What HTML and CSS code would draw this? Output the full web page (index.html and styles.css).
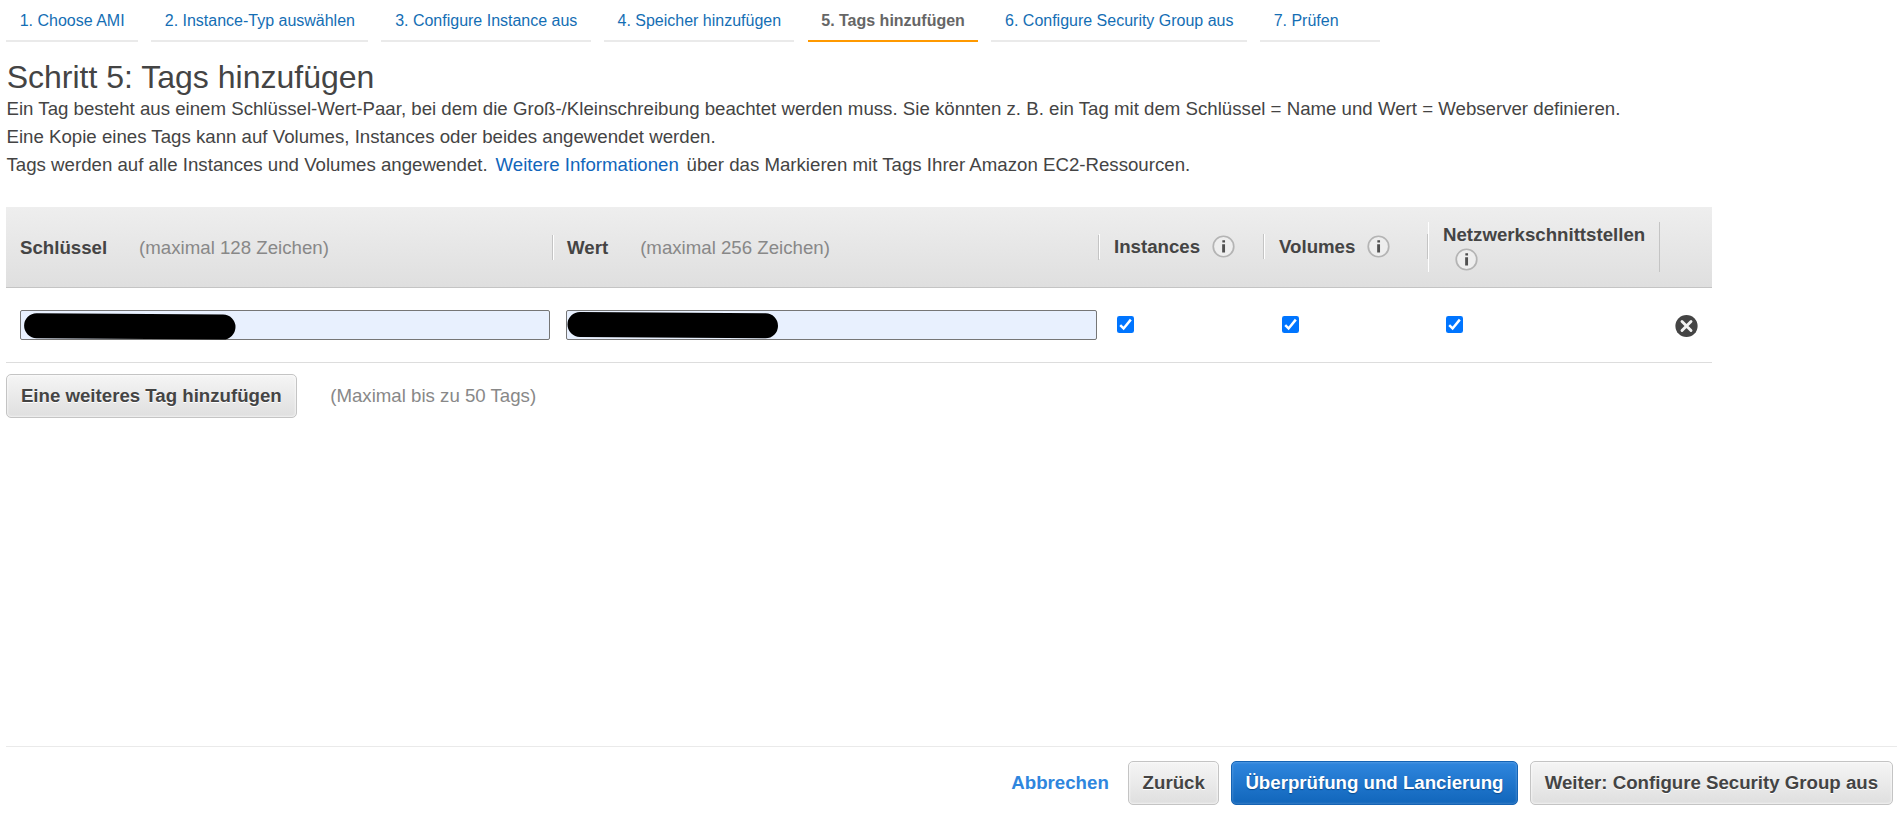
FILE: index.html
```html
<!DOCTYPE html>
<html lang="de">
<head>
<meta charset="utf-8">
<title>Schritt 5: Tags hinzufügen</title>
<link rel="stylesheet" href="styles.css">
</head>
<body>
<svg class="defs" width="0" height="0">
  <symbol id="info" viewBox="0 0 24 24">
    <circle cx="12" cy="12" r="10.7" fill="#eee" stroke="#b4b4b4" stroke-width="1.8"/>
    <path d="M10.8 5.5h2.8v2.4h-2.8zM10.6 9.6h3v8.7h-3z" fill="#505050"/>
  </symbol>
  <symbol id="check" viewBox="0 0 17 17">
    <rect width="17" height="17" rx="2.3" fill="#0075ff"/>
    <path d="M3.2 9.2l3.4 3.3L13.8 3.6" fill="none" stroke="#fff" stroke-width="2.5"/>
  </symbol>
</svg>
<div class="page">
  <nav class="steps">
    <a class="step">1. Choose AMI</a>
    <a class="step">2. Instance-Typ auswählen</a>
    <a class="step">3. Configure Instance aus</a>
    <a class="step">4. Speicher hinzufügen</a>
    <a class="step active">5. Tags hinzufügen</a>
    <a class="step">6. Configure Security Group aus</a>
    <a class="step last">7. Prüfen</a>
  </nav>

  <main class="content">
    <h1 class="title">Schritt 5: Tags hinzufügen</h1>
    <p class="intro">Ein Tag besteht aus einem Schlüssel-Wert-Paar, bei dem die Groß-/Kleinschreibung beachtet werden muss. Sie könnten z. B. ein Tag mit dem Schlüssel = Name und Wert = Webserver definieren.<br>Eine Kopie eines Tags kann auf Volumes, Instances oder beides angewendet werden.<br>Tags werden auf alle Instances und Volumes angewendet. <a class="more">Weitere Informationen</a> über das Markieren mit Tags Ihrer Amazon EC2-Ressourcen.</p>

    <section class="table">
      <div class="row head">
        <div class="th key"><b>Schlüssel</b><span class="limit">(maximal 128 Zeichen)</span></div>
        <div class="th value"><b>Wert</b><span class="limit">(maximal 256 Zeichen)</span></div>
        <div class="th scope"><b>Instances</b><svg class="info"><use href="#info"/></svg></div>
        <div class="th scope"><b>Volumes</b><svg class="info"><use href="#info"/></svg></div>
        <div class="th tall"><b>Netzwerkschnittstellen</b><svg class="info"><use href="#info"/></svg></div>
        <div></div>
      </div>
      <div class="row body">
        <div class="td field-cell first">
          <div class="field">
            <svg class="redaction" viewBox="0 0 530 30"><path d="M16.6 15.7L203 17" stroke="#000" stroke-width="25" stroke-linecap="round"/></svg>
          </div>
        </div>
        <div class="td field-cell">
          <div class="field">
            <svg class="redaction" viewBox="0 0 531 30"><path d="M14 14.5L199.5 15.8" stroke="#000" stroke-width="25" stroke-linecap="round"/></svg>
          </div>
        </div>
        <div class="td"><svg class="check"><use href="#check"/></svg></div>
        <div class="td"><svg class="check"><use href="#check"/></svg></div>
        <div class="td"><svg class="check"><use href="#check"/></svg></div>
        <div class="td remove-cell">
          <svg class="remove" viewBox="0 0 24 24"><circle cx="12" cy="12" r="11.6" fill="#444"/><path d="M7.3 7.3l9.4 9.4M16.7 7.3l-9.4 9.4" stroke="#f2f2f2" stroke-width="3" stroke-linecap="round"/></svg>
        </div>
      </div>
    </section>

    <div class="add">
      <button class="btn">Eine weiteres Tag hinzufügen</button>
      <span class="hint">(Maximal bis zu 50 Tags)</span>
    </div>
  </main>

  <footer class="footer">
    <a class="cancel">Abbrechen</a>
    <button class="btn compact">Zurück</button>
    <button class="btn primary compact">Überprüfung und Lancierung</button>
    <button class="btn">Weiter: Configure Security Group aus</button>
  </footer>
</div>
</body>
</html>
```
FILE: styles.css
```css
* { box-sizing: border-box; }

body {
  margin: 0;
  background: #fff;
  color: #444;
  font-family: "Liberation Sans", Arial, sans-serif;
  font-size: 18.667px;
  line-height: 25px;
}

.defs { position: absolute; }

.page {
  display: flex;
  flex-direction: column;
  height: 815px;
  padding-left: 6px;
  overflow: hidden;
}

.steps {
  display: flex;
  gap: 13.2px;
}

.step {
  height: 42px;
  padding: 12px 13.3px 0 13.7px;
  border-bottom: 2px solid #eaeaea;
  color: #146eb4;
  font-size: 16px;
  line-height: 18px;
  letter-spacing: -0.005px;
  white-space: nowrap;
}

.step.active {
  border-bottom-color: #f90;
  color: #666;
  font-weight: bold;
}

.step.last { width: 120px; }

.content { flex: 1; }

.title {
  margin: 17px 0 0 0.7px;
  font-size: 32px;
  font-weight: normal;
  line-height: 36px;
}

.intro {
  margin: 0 0 0 0.5px;
  line-height: 28px;
  white-space: nowrap;
}

.more {
  margin: 0 2.67px;
  color: #1166bb;
}

.table {
  width: 1706px;
  margin-top: 28px;
}

.row {
  display: grid;
  grid-template-columns: 547px 546px 165px 164px 232px 52px;
}

.head {
  height: 81px;
  align-items: center;
  border-bottom: 1px solid #c4c4c4;
  background: linear-gradient(#eee, #dfdfdf);
}

.th {
  display: flex;
  height: 25px;
  padding-left: 14px;
  border-left: 1px solid #fff;
  border-right: 1px solid #c4c4c4;
}

.th.key {
  margin-top: 1px;
  border-left: 0;
}

.th.value {
  margin-top: 1px;
  padding-left: 13px;
}

.th.scope { margin-bottom: 1px; }

.th.tall {
  display: block;
  height: 50px;
}

.limit {
  margin-left: 32px;
  color: #888;
}

.info {
  width: 23px;
  height: 23px;
  margin: 1px 0 0 12px;
}

.tall .info {
  display: block;
}

.body {
  height: 75px;
  border-bottom: 1px solid #ddd;
}

.td { padding: 28px 0 0 18px; }

.field-cell { padding: 22px 2px 0 13px; }

.field-cell.first { padding: 22px 3px 0 14px; }

.field {
  position: relative;
  height: 30px;
  border: 1px solid #767676;
  border-radius: 2px;
  background: #e8f0fe;
}

.redaction {
  position: absolute;
  inset: -1px;
}

.check {
  display: block;
  width: 17px;
  height: 17px;
}

.remove-cell { padding: 26px 0 0 15px; }

.remove {
  display: block;
  width: 23px;
  height: 24px;
}

.add {
  display: flex;
  align-items: flex-start;
  gap: 33.5px;
  margin-top: 11px;
}

.hint {
  margin-top: 9px;
  color: #888;
}

.btn {
  height: 44px;
  padding: 0 13.9px 1px;
  border: 1px solid #c4c4c4;
  border-radius: 5px;
  background: linear-gradient(#f5f5f5, #dfdfdf);
  box-shadow: inset 0 0 2px 1px rgba(255, 255, 255, 0.55);
  color: #444;
  font: bold 18.667px/25px "Liberation Sans", Arial, sans-serif;
  text-shadow: 0 1px 0 #fff;
  white-space: nowrap;
}

.btn.compact {
  padding-left: 13.3px;
  padding-right: 13.3px;
}

.btn.primary {
  border-color: #1563b4;
  background: linear-gradient(#2f86de, #1166bb);
  box-shadow: inset 0 0 2px 1px rgba(255, 255, 255, 0.15);
  color: #fff;
  text-shadow: 0 1px 1px #0a4a8c;
}

.footer {
  display: flex;
  align-items: flex-start;
  justify-content: flex-end;
  gap: 12px;
  height: 69px;
  padding: 14px 4px 0 0;
  border-top: 1px solid #eaeaea;
}

.cancel {
  margin: 9px 7.5px 0 0;
  color: #2f86de;
  font-weight: bold;
}
```
